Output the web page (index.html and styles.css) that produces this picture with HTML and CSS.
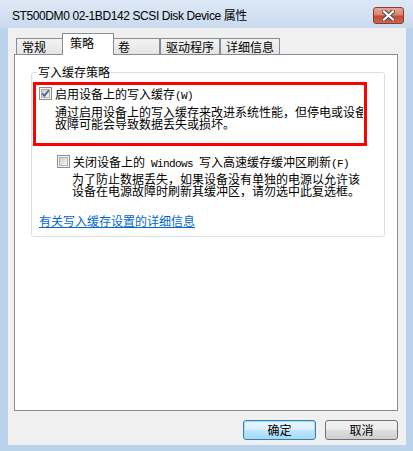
FILE: index.html
```html
<!DOCTYPE html>
<html lang="zh-CN">
<head>
<meta charset="utf-8">
<title>属性</title>
<link rel="stylesheet" href="styles.css">
</head>
<body>
<div class="window">
  <div class="titlebar">
    <span class="title">ST500DM0 02-1BD142 SCSI Disk Device 属性</span>
    <span class="close">
      <svg width="13" height="11" viewBox="0 0 13 11">
        <path d="M2 1.5 L11 9.5 M11 1.5 L2 9.5" stroke="#4a4a4a" stroke-width="4.2" stroke-linecap="square" fill="none"/>
        <path d="M2 1.5 L11 9.5 M11 1.5 L2 9.5" stroke="#ffffff" stroke-width="2.2" stroke-linecap="square" fill="none"/>
      </svg>
    </span>
  </div>
  <div class="content">
    <div class="tabs">
      <span class="tab">常规</span>
      <span class="tab active">策略</span>
      <span class="tab">卷</span>
      <span class="tab">驱动程序</span>
      <span class="tab">详细信息</span>
    </div>
    <div class="panel">
      <fieldset class="group">
        <legend class="legend">写入缓存策略</legend>
        <div class="opt opt1">
          <svg class="cb" width="13" height="13" viewBox="0 0 13 13">
            <defs><linearGradient id="g1" x1="0" y1="0" x2="1" y2="1"><stop offset="0" stop-color="#c9ccd1"/><stop offset="1" stop-color="#f7f7f7"/></linearGradient></defs>
            <rect x="0.5" y="0.5" width="12" height="12" fill="#f5f5f5" stroke="#8e8f8f"/>
            <rect x="2.5" y="2.5" width="8" height="8" fill="url(#g1)" stroke="#aeb2b8"/>
            <path d="M3.2 6.2 L5.4 8.8 L9.8 3.2" stroke="#4b5e8f" stroke-width="1.7" fill="none"/>
          </svg>
          <span class="optlabel">启用设备上的写入缓存<span class="mono">(W)</span></span>
        </div>
        <div class="desc desc1">
          <span class="line">通过启用设备上的写入缓存来改进系统性能，但停电或设备</span>
          <span class="line">故障可能会导致数据丢失或损坏。</span>
        </div>
        <div class="opt opt2">
          <svg class="cb" width="13" height="13" viewBox="0 0 13 13">
            <defs><linearGradient id="g2" x1="0" y1="0" x2="1" y2="1"><stop offset="0" stop-color="#c9ccd1"/><stop offset="1" stop-color="#f7f7f7"/></linearGradient></defs>
            <rect x="0.5" y="0.5" width="12" height="12" fill="#f5f5f5" stroke="#8e8f8f"/>
            <rect x="2.5" y="2.5" width="8" height="8" fill="url(#g2)" stroke="#aeb2b8"/>
          </svg>
          <span class="optlabel">关闭设备上的<span class="mono"> Windows </span>写入高速缓存缓冲区刷新<span class="mono">(F)</span></span>
        </div>
        <div class="desc desc2">
          <span class="line">为了防止数据丢失，如果设备没有单独的电源以允许该</span>
          <span class="line">设备在电源故障时刷新其缓冲区，请勿选中此复选框。</span>
        </div>
        <a class="link" href="#">有关写入缓存设置的详细信息</a>
      </fieldset>
    </div>
    <div class="actions">
      <span class="btn default">确定</span>
      <span class="btn">取消</span>
    </div>
  </div>
  <div class="highlight"></div>
</div>
</body>
</html>
```
FILE: styles.css
```css
html, body {
  margin: 0;
  padding: 0;
}
body {
  font-family: "Noto Sans CJK SC", sans-serif;
  font-size: 12px;
  color: #000;
}
.window {
  position: relative;
  width: 413px;
  height: 451px;
  box-sizing: border-box;
  background: #bad2eb;
  display: flex;
  flex-direction: column;
  padding: 0 7px 6px 8px;
}
.titlebar {
  height: 28px;
  margin: 0 -7px 0 -8px;
  padding: 0 9px 0 12px;
  background: linear-gradient(#dde8f5, #c9dbef);
  display: flex;
  align-items: flex-start;
  justify-content: space-between;
  box-sizing: border-box;
}
.title {
  font-family: "Liberation Sans", "Noto Sans CJK SC", sans-serif;
  font-size: 12px;
  letter-spacing: -0.4px;
  line-height: 14px;
  margin-top: 9px;
  color: #000;
}
.close {
  margin-top: 7px;
  width: 31px;
  height: 17px;
  box-sizing: border-box;
  border: 1px solid #8a3a30;
  border-radius: 3px;
  background: linear-gradient(#eaa596 0%, #d9826f 45%, #c44a35 55%, #d4634d 100%);
  display: flex;
  align-items: center;
  justify-content: center;
}
.content {
  flex: 1;
  background: #f0f0f0;
  display: flex;
  flex-direction: column;
  padding: 5px 8px 0 6px;
}
.tabs {
  display: flex;
  align-items: flex-end;
  padding-left: 2px;
  height: 21px;
  position: relative;
  z-index: 1;
}
.tab {
  box-sizing: border-box;
  min-width: 48px;
  height: 16px;
  padding: 0 5px;
  border: 1px solid #898c95;
  border-bottom: none;
  background: linear-gradient(#f3f3f3, #e5e5e5);
  line-height: 15px;
}
.tab.active {
  min-width: 52px;
  height: 22px;
  margin: 0 -2px -1px;
  padding: 0 7px;
  background: #fff;
  line-height: 18px;
  position: relative;
}
.panel {
  height: 357px;
  box-sizing: border-box;
  border: 1px solid #898c95;
  background: #fff;
  padding: 11px 12px 0 16px;
}
.group {
  margin: 0;
  min-width: 0;
  border: 1px solid #d5dfe5;
  border-radius: 3px;
  padding: 0 0 8px 5px;
  display: flex;
  flex-direction: column;
  align-items: flex-start;
}
.legend {
  padding: 0 1px;
  line-height: 12px;
  color: #000;
}
.opt {
  display: flex;
  align-items: flex-start;
  gap: 3px;
  line-height: 13px;
}
.opt1 {
  margin: 9px 0 0 2px;
}
.opt2 {
  margin: 25px 0 0 20px;
}
.cb {
  flex: none;
  display: block;
}
.mono {
  font-family: "Liberation Mono", monospace;
  font-size: 11px;
  letter-spacing: -0.6px;
}
.desc {
  display: flex;
  flex-direction: column;
  line-height: 12px;
  white-space: nowrap;
  overflow: hidden;
}
.desc1 {
  margin: 3px 0 0 18px;
  width: 308px;
}
.desc2 {
  margin: 2px 0 0 35px;
}
.link {
  margin: 17px 0 0 2px;
  line-height: 14px;
  color: #0066cc;
  text-decoration: underline;
}
.actions {
  display: flex;
  justify-content: flex-end;
  gap: 9px;
  padding: 9px 0 0;
}
.btn {
  box-sizing: border-box;
  width: 73px;
  height: 20px;
  border: 1px solid #707070;
  border-radius: 3px;
  background: linear-gradient(#f2f2f2 0%, #ebebeb 50%, #dddddd 51%, #cfcfcf 100%);
  text-align: center;
  line-height: 18px;
}
.btn.default {
  border-color: #3c7fb1;
  background: linear-gradient(#eaf6fd 0%, #d9f0fc 50%, #bee6fd 51%, #a7d9f5 100%);
  box-shadow: inset 0 0 0 1px #9fdcf5;
}
.highlight {
  position: absolute;
  left: 33px;
  top: 82px;
  width: 334px;
  height: 64px;
  box-sizing: border-box;
  border: 3px solid #ff0000;
  pointer-events: none;
}
```
